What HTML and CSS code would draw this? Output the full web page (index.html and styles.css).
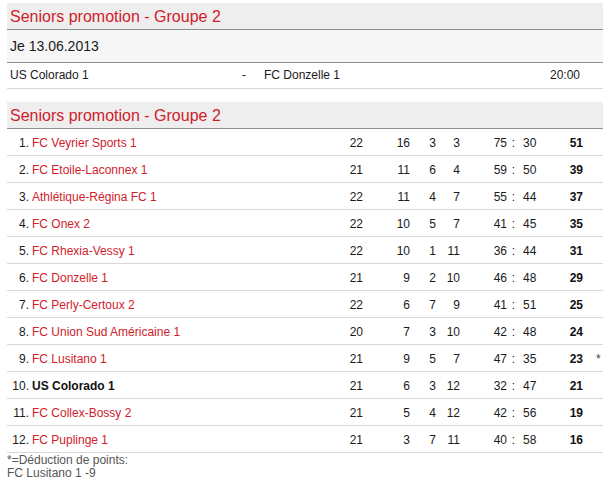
FILE: index.html
```html
<!DOCTYPE html>
<html>
<head>
<meta charset="utf-8">
<link rel="stylesheet" href="styles.css">
</head>
<body>
<div class="page">
  <section class="block">
    <h2 class="title">Seniors promotion - Groupe 2</h2>
    <div class="date">Je 13.06.2013</div>
    <div class="match">
      <span class="home">US Colorado 1</span>
      <span class="dash">-</span>
      <span class="away">FC Donzelle 1</span>
      <span class="time">20:00</span>
    </div>
  </section>

  <section class="block standings">
    <h2 class="title">Seniors promotion - Groupe 2</h2>
    <div class="row"><span class="rk">1.</span><span class="team">FC Veyrier Sports 1</span><span class="n">22</span><span class="n">16</span><span class="n">3</span><span class="n">3</span><span class="n">75</span><span class="c">:</span><span class="ga">30</span><span class="pts">51</span><span class="st"></span></div>
    <div class="row"><span class="rk">2.</span><span class="team">FC Etoile-Laconnex 1</span><span class="n">21</span><span class="n">11</span><span class="n">6</span><span class="n">4</span><span class="n">59</span><span class="c">:</span><span class="ga">50</span><span class="pts">39</span><span class="st"></span></div>
    <div class="row"><span class="rk">3.</span><span class="team">Athlétique-Régina FC 1</span><span class="n">22</span><span class="n">11</span><span class="n">4</span><span class="n">7</span><span class="n">55</span><span class="c">:</span><span class="ga">44</span><span class="pts">37</span><span class="st"></span></div>
    <div class="row"><span class="rk">4.</span><span class="team">FC Onex 2</span><span class="n">22</span><span class="n">10</span><span class="n">5</span><span class="n">7</span><span class="n">41</span><span class="c">:</span><span class="ga">45</span><span class="pts">35</span><span class="st"></span></div>
    <div class="row"><span class="rk">5.</span><span class="team">FC Rhexia-Vessy 1</span><span class="n">22</span><span class="n">10</span><span class="n">1</span><span class="n">11</span><span class="n">36</span><span class="c">:</span><span class="ga">44</span><span class="pts">31</span><span class="st"></span></div>
    <div class="row"><span class="rk">6.</span><span class="team">FC Donzelle 1</span><span class="n">21</span><span class="n">9</span><span class="n">2</span><span class="n">10</span><span class="n">46</span><span class="c">:</span><span class="ga">48</span><span class="pts">29</span><span class="st"></span></div>
    <div class="row"><span class="rk">7.</span><span class="team">FC Perly-Certoux 2</span><span class="n">22</span><span class="n">6</span><span class="n">7</span><span class="n">9</span><span class="n">41</span><span class="c">:</span><span class="ga">51</span><span class="pts">25</span><span class="st"></span></div>
    <div class="row"><span class="rk">8.</span><span class="team">FC Union Sud Américaine 1</span><span class="n">20</span><span class="n">7</span><span class="n">3</span><span class="n">10</span><span class="n">42</span><span class="c">:</span><span class="ga">48</span><span class="pts">24</span><span class="st"></span></div>
    <div class="row"><span class="rk">9.</span><span class="team">FC Lusitano 1</span><span class="n">21</span><span class="n">9</span><span class="n">5</span><span class="n">7</span><span class="n">47</span><span class="c">:</span><span class="ga">35</span><span class="pts">23</span><span class="st">*</span></div>
    <div class="row own"><span class="rk">10.</span><span class="team">US Colorado 1</span><span class="n">21</span><span class="n">6</span><span class="n">3</span><span class="n">12</span><span class="n">32</span><span class="c">:</span><span class="ga">47</span><span class="pts">21</span><span class="st"></span></div>
    <div class="row"><span class="rk">11.</span><span class="team">FC Collex-Bossy 2</span><span class="n">21</span><span class="n">5</span><span class="n">4</span><span class="n">12</span><span class="n">42</span><span class="c">:</span><span class="ga">56</span><span class="pts">19</span><span class="st"></span></div>
    <div class="row"><span class="rk">12.</span><span class="team">FC Puplinge 1</span><span class="n">21</span><span class="n">3</span><span class="n">7</span><span class="n">11</span><span class="n">40</span><span class="c">:</span><span class="ga">58</span><span class="pts">16</span><span class="st"></span></div>
    <p class="note">*=Déduction de points:<br>FC Lusitano 1 -9</p>
  </section>
</div>
</body>
</html>
```

FILE: styles.css
```css
html, body {
  margin: 0;
  padding: 0;
  background: #ffffff;
}

body {
  font-family: "Liberation Sans", Arial, sans-serif;
  font-size: 12px;
  color: #1a1a1a;
}

.page {
  width: 596px;
  padding: 3px 0 0 7px;
}

.block + .block {
  margin-top: 13px;
}

.title {
  margin: 0;
  height: 25px;
  padding-top: 1px;
  line-height: 26px;
  padding-left: 3px;
  background: #eeeeee;
  border-bottom: 1px solid #8e8e8e;
  font-size: 16px;
  font-weight: normal;
  color: #d0212b;
}

.date {
  height: 32px;
  line-height: 32px;
  padding-left: 3px;
  background: #f6f6f6;
  border-bottom: 1px solid #8e8e8e;
  font-size: 14px;
  color: #1a1a1a;
}

.match {
  display: grid;
  grid-template-columns: 233px 24px 286px 53px;
  height: 25px;
  line-height: 25px;
  border-bottom: 1px solid #d8d8d8;
}

.home {
  padding-left: 3px;
}

.dash {
  padding-left: 2px;
}

.row {
  display: grid;
  grid-template-columns: 22px 311px 23px 47px 26px 24px 47px 13px 25px 38px 20px;
  height: 25px;
  padding-top: 1px;
  line-height: 26px;
  border-bottom: 1px solid #d8d8d8;
}

.rk {
  text-align: right;
}

.team {
  padding-left: 3px;
  color: #d0212b;
  white-space: nowrap;
}

.own .team {
  color: #111111;
  font-weight: bold;
}

.n {
  text-align: right;
}

.c {
  text-align: center;
}

.ga {
  padding-left: 3px;
}

.pts {
  text-align: right;
  font-weight: bold;
  color: #111111;
}

.st {
  padding-left: 13px;
  color: #444444;
}

.note {
  margin: 0;
  padding-top: 1px;
  font-size: 12px;
  line-height: 13px;
  color: #555555;
}
```
